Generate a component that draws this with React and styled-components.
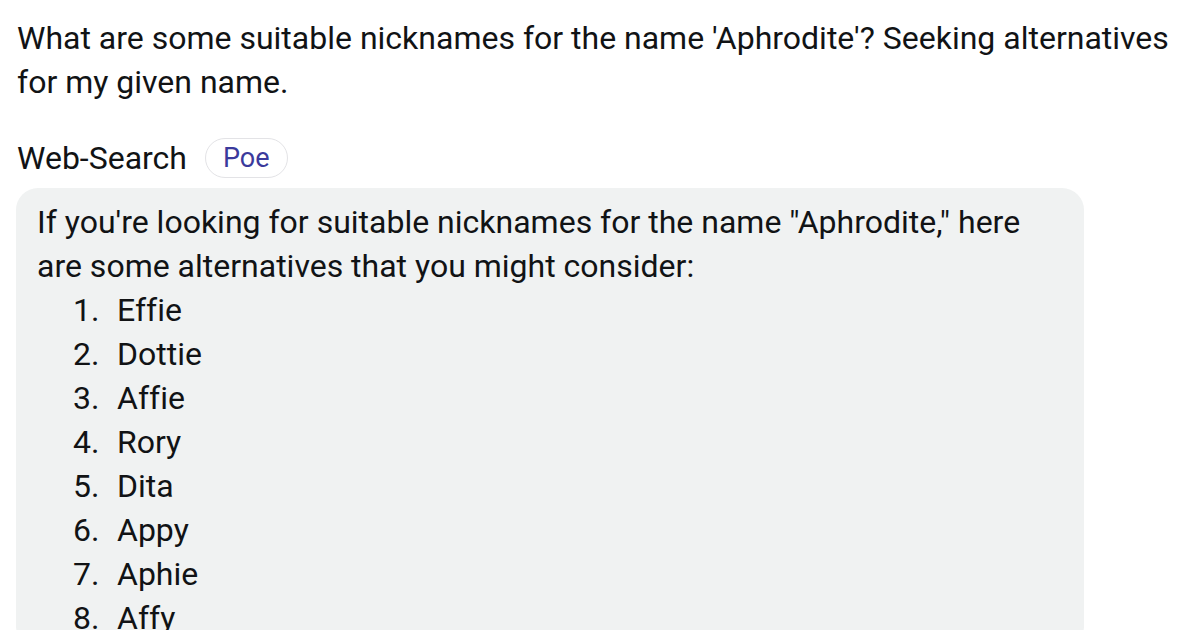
import React from "react";
import styled, { createGlobalStyle } from "styled-components";

const Global = createGlobalStyle`
  html, body { margin: 0; padding: 0; background: #ffffff; }
  body {
    font-family: Roboto, "Noto Sans", Arial, sans-serif;
    color: #111315;
    font-variant-ligatures: none;
  }
`;

const Page = styled.div`
  padding: 16px 0 0 17px;
  width: 1183px;
  height: 630px;
  overflow: hidden;
  box-sizing: border-box;
`;

const Question = styled.p`
  margin: 0;
  font-size: 32px;
  line-height: 44px;
  color: #111315;
`;

const BotRow = styled.div`
  display: flex;
  align-items: center;
  gap: 18px;
  margin-top: 34px;
  height: 40px;
`;

const BotName = styled.span`
  font-size: 32px;
  color: #111315;
`;

const Pill = styled.span`
  display: inline-flex;
  align-items: center;
  justify-content: center;
  height: 40px;
  padding: 0 17px;
  border: 1.5px solid #e3e3e6;
  border-radius: 20px;
  box-sizing: border-box;
  font-size: 27px;
  color: #3b3a9c;
`;

const Bubble = styled.div`
  margin-top: 10px;
  margin-left: -1px;
  width: 1068px;
  height: 460px;
  background: #f0f2f2;
  border-radius: 22px;
  padding: 12px 20px 20px 21px;
  box-sizing: border-box;
  font-size: 32px;
  line-height: 44px;
`;

const Para = styled.p`
  margin: 0;
`;

const List = styled.ol`
  list-style: none;
  margin: 0;
  padding: 0 0 0 36px;
`;

const Item = styled.li`
  display: flex;
`;

const Num = styled.span`
  width: 44px;
  flex: none;
`;

const names = ["Effie", "Dottie", "Affie", "Rory", "Dita", "Appy", "Aphie", "Affy"];

export default function App() {
  return (
    <>
      <Global />
      <Page>
        <Question>
          What are some suitable nicknames for the name 'Aphrodite'? Seeking alternatives for my given name.
        </Question>
        <BotRow>
          <BotName>Web-Search</BotName>
          <Pill>Poe</Pill>
        </BotRow>
        <Bubble>
          <Para>
            If you're looking for suitable nicknames for the name "Aphrodite," here are some alternatives that you might consider:
          </Para>
          <List>
            {names.map((n, i) => (
              <Item key={n}>
                <Num>{i + 1}.</Num>
                <span>{n}</span>
              </Item>
            ))}
          </List>
        </Bubble>
      </Page>
    </>
  );
}
